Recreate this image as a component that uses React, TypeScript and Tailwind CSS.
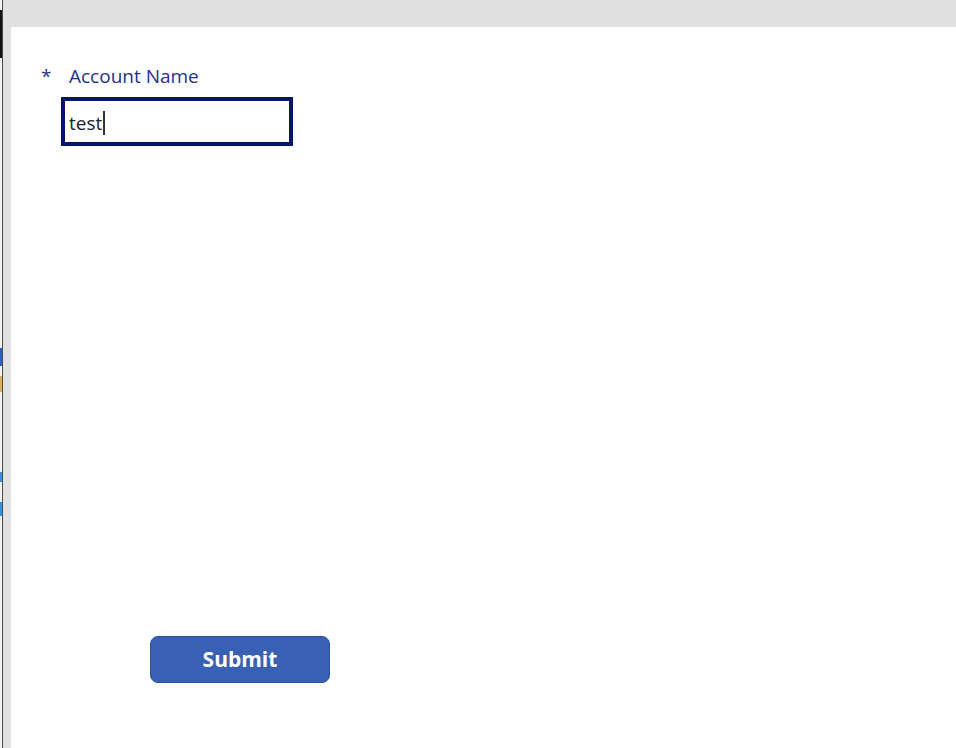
export default function App() {
  return (
    <div className="flex h-[748px] w-[956px] overflow-hidden bg-white font-['Open_Sans',sans-serif]">
      {/* sliver of the window behind */}
      <div className="flex w-[2px] flex-col bg-[#f3f3f3]">
        <div className="h-[10px]" />
        <div className="h-[48px] bg-[#111]" />
        <div className="h-[290px]" />
        <div className="h-[18px] bg-[#2c5fc7]" />
        <div className="h-[10px]" />
        <div className="h-[16px] bg-[#d6b25a]" />
        <div className="h-[80px]" />
        <div className="h-[10px] bg-[#3a8fe0]" />
        <div className="h-[20px]" />
        <div className="h-[14px] bg-[#3a8fe0]" />
      </div>
      <div className="w-px bg-[#4a4a4a]" />
      <div className="flex flex-1 flex-col">
        <div className="h-[27px] bg-[#e0e0e0]" />
        <div className="flex flex-1">
          <div className="w-[8px] bg-[#e0e0e0]" />
          <div className="flex-1 bg-white pt-[34px]">
            <div className="flex items-start pl-[30px] text-[19px] leading-[30px] text-[#25328a]">
              <span className="w-[28px]">*</span>
              <span>Account Name</span>
            </div>
            <div className="ml-[50px] mt-[6px] flex h-[49px] w-[232px] items-center border-4 border-[#061467] px-[4px] pt-[3px] text-[19px] text-[#222]">
              <span>test</span>
              <span className="ml-px h-[24px] w-[2px] bg-[#333]" />
            </div>
            <button className="ml-[139px] mt-[490px] flex h-[47px] w-[180px] items-center justify-center rounded-[8px] border border-[#2c4f9e] bg-[#3860b4] pt-px text-[21px] font-bold text-white">
              Submit
            </button>
          </div>
        </div>
      </div>
    </div>
  );
}
